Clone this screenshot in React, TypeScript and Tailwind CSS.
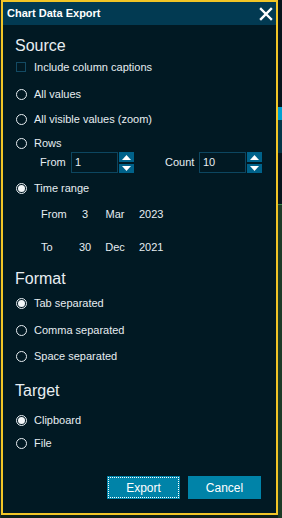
import React from "react";

const font = { fontFamily: '"Liberation Sans", Arial, sans-serif' };

function Radio({ checked, label, h = "h-[20px]", mt }: { checked?: boolean; label: string; h?: string; mt: string }) {
  return (
    <div className={`flex items-center ${h} ${mt} pl-[13px]`}>
      <div className="w-[11px] h-[11px] rounded-full border border-[#e8eef2] flex items-center justify-center">
        {checked && <div className="w-[7px] h-[7px] rounded-full bg-[#f2f6f8]" />}
      </div>
      <span className="ml-[7px] text-[11px] text-[#e6edf1] leading-none">{label}</span>
    </div>
  );
}

function Spinner() {
  return (
    <div className="flex flex-col gap-[2px] ml-[1px]">
      <div className="w-[15px] h-[10px] bg-[#00628a] flex items-center justify-center">
        <svg width="9" height="5" viewBox="0 0 9 5"><polygon points="4.5,0 9,5 0,5" fill="#ffffff" /></svg>
      </div>
      <div className="w-[15px] h-[9px] bg-[#00628a] flex items-center justify-center">
        <svg width="9" height="5" viewBox="0 0 9 5"><polygon points="0,0 9,0 4.5,5" fill="#ffffff" /></svg>
      </div>
    </div>
  );
}

function Heading({ text, mt }: { text: string; mt: string }) {
  return <div className={`h-[20px] leading-[20px] ${mt} pl-[12px] text-[16px] text-[#e8eef2]`}>{text}</div>;
}

function DateRow({ label, day, month, year, mt }: { label: string; day: string; month: string; year: string; mt: string }) {
  return (
    <div className={`flex items-center h-[20px] ${mt} pl-[38px] text-[11px] text-[#e6edf1]`}>
      <span className="w-[34px]">{label}</span>
      <span className="w-[20px] text-center">{day}</span>
      <span className="w-[3px]" />
      <span className="w-[34px] text-center">{month}</span>
      <span className="ml-[7px]">{year}</span>
    </div>
  );
}

export default function App() {
  return (
    <div className="w-[282px] h-[518px] bg-[#0d1f1a] flex overflow-hidden" style={font}>
      <div className="w-[1px] h-full bg-[#1a2a2a]" />
      <div className="w-[277px] h-[515px] border-2 border-[#f2c526] bg-[#011923] flex flex-col">
        <div className="h-[23px] bg-[#023a52] flex items-center justify-between pl-[4px] pr-[2px]">
          <span className="text-[11px] font-bold text-white">Chart Data Export</span>
          <svg width="14" height="14" viewBox="0 0 14 14" className="mr-[1px]">
            <path d="M2 2 L12 12 M12 2 L2 12" stroke="#ffffff" strokeWidth="2.4" strokeLinecap="square" />
          </svg>
        </div>
        <div className="flex flex-col">
          <Heading text="Source" mt="mt-[11px]" />
          <div className="flex items-center h-[20px] mt-[1px] pl-[13px]">
            <div className="w-[10px] h-[10px] border border-[#134a63]" />
            <span className="ml-[8px] text-[11px] text-[#e6edf1] leading-none">Include column captions</span>
          </div>
          <Radio label="All values" mt="mt-[7px]" />
          <Radio label="All visible values (zoom)" mt="mt-[5px]" />
          <Radio label="Rows" h="h-[18px]" mt="mt-[5px]" />
          <div className="flex items-center h-[21px] pl-[37px] text-[11px] text-[#e6edf1]">
            <span className="w-[31px]">From</span>
            <div className="w-[47px] h-[21px] border border-[#0c4660] flex items-center pl-[3px]">1</div>
            <Spinner />
            <span className="ml-[31px] w-[34px]">Count</span>
            <div className="w-[47px] h-[21px] border border-[#0c4660] flex items-center pl-[3px]">10</div>
            <Spinner />
          </div>
          <Radio label="Time range" checked mt="mt-[5px]" />
          <DateRow label="From" day="3" month="Mar" year="2023" mt="mt-[6px]" />
          <DateRow label="To" day="30" month="Dec" year="2021" mt="mt-[13px]" />
          <Heading text="Format" mt="mt-[12px]" />
          <Radio label="Tab separated" checked mt="mt-[4px]" />
          <Radio label="Comma separated" mt="mt-[7px]" />
          <Radio label="Space separated" mt="mt-[6px]" />
          <Heading text="Target" mt="mt-[15px]" />
          <Radio label="Clipboard" checked mt="mt-[9px]" />
          <Radio label="File" mt="mt-[3px]" />
          <div className="flex justify-end gap-[8px] mt-[23px] pr-[15px]">
            <button className="w-[73px] h-[23px] bg-[#0083a8] p-[1px] text-[12px] text-white">
              <div className="w-full h-full border border-dotted border-white flex items-center justify-center">Export</div>
            </button>
            <button className="w-[73px] h-[23px] bg-[#0083a8] text-[12px] text-white flex items-center justify-center">Cancel</button>
          </div>
        </div>
      </div>
      <div className="w-[4px] h-full flex flex-col">
        <div className="h-[107px] bg-[#06141c]" />
        <div className="h-[13px] bg-[#00a0d0]" />
        <div className="h-[33px] bg-[#033547]" />
        <div className="h-[51px] bg-[#06141c]" />
        <div className="h-[1px] bg-[#3a8a4a]" />
        <div className="flex-1 bg-[#1c3a26]" />
      </div>
    </div>
  );
}
